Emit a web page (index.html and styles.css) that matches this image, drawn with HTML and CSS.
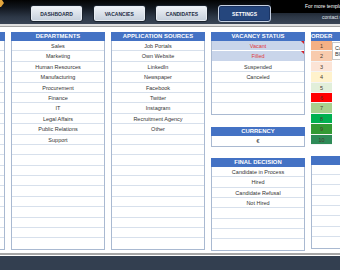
FILE: index.html
```html
<!DOCTYPE html>
<html>
<head>
    <title>Recruitment Tracker - Settings</title>
    <link rel="stylesheet" href="styles.css">
</head>
<body>
    <header class="topbar">
        <div class="logo">
            <svg width="8" height="9" viewBox="0 0 8 9"><path d="M0 0h4l2 3-3 4H0z" fill="#e3a53c"/></svg>
        </div>
        <nav class="tabs">
            <div class="tab">DASHBOARD</div>
            <div class="tab">VACANCIES</div>
            <div class="tab">CANDIDATES</div>
            <div class="tab active">SETTINGS</div>
        </nav>
        <div class="promo">
            <div class="promo-top">For more templates</div>
            <div class="promo-bottom">contact us</div>
        </div>
    </header>
    <div class="rule"></div>

    <main class="board">
        <div class="col">
            <div class="panel">
                <div class="panel-head">POSITIONS</div>
                <div class="rows" id="positions"></div>
            </div>
        </div>

        <div class="col">
            <div class="panel">
                <div class="panel-head">DEPARTMENTS</div>
                <div class="rows" id="departments"></div>
            </div>
        </div>

        <div class="col">
            <div class="panel">
                <div class="panel-head">APPLICATION SOURCES</div>
                <div class="rows" id="sources"></div>
            </div>
        </div>

        <div class="col">
            <div class="panel">
                <div class="panel-head">VACANCY STATUS</div>
                <div class="rows" id="status"></div>
            </div>
            <div class="panel currency">
                <div class="panel-head">CURRENCY</div>
                <div class="rows">
                    <div class="row">€</div>
                </div>
            </div>
            <div class="panel decision">
                <div class="panel-head">FINAL DECISION</div>
                <div class="rows" id="decision"></div>
            </div>
        </div>

        <div class="col">
            <div class="panel order">
                <div class="panel-head order-head"><span>ORDER</span></div>
                <div class="rows" id="order"></div>
                <div class="note">Candidate<br>Blue</div>
            </div>
            <div class="panel decision">
                <div class="panel-head">STAGES</div>
                <div class="rows" id="stages"></div>
            </div>
        </div>
    </main>

    <footer class="bottombar"></footer>

    <script>
        function fillRows(id, items, total, flagged) {
            const box = document.getElementById(id);
            for (let i = 0; i < total; i++) {
                let row = document.createElement("div");
                row.className = "row";
                row.textContent = items[i] || "";
                if (flagged && i < flagged) row.classList.add("flag");
                box.appendChild(row);
            }
        }

        fillRows("positions", [], 20);
        fillRows("departments", ["Sales", "Marketing", "Human Resources", "Manufacturing", "Procurement",
            "Finance", "IT", "Legal Affairs", "Public Relations", "Support"], 20);
        fillRows("sources", ["Job Portals", "Own Website", "LinkedIn", "Newspaper", "Facebook",
            "Twitter", "Instagram", "Recruitment Agency", "Other"], 20);
        fillRows("status", ["Vacant", "Filled", "Suspended", "Canceled"], 7, 2);
        fillRows("decision", ["Candidate in Process", "Hired", "Candidate Refusal", "Not Hired"], 8);
        fillRows("stages", [], 8);

        const orderColors = ["#f4b084", "#f8cbad", "#fce4d6", "#fff2cc", "#e2efda",
            "#ff0000", "#a9d08e", "#00b050", "#339933", "#2e8b57"];
        const order = document.getElementById("order");
        orderColors.forEach((color, index) => {
            let row = document.createElement("div");
            row.className = "order-row";
            let cell = document.createElement("div");
            cell.className = "order-cell";
            cell.style.background = color;
            cell.textContent = index + 1;
            row.appendChild(cell);
            order.appendChild(row);
        });
    </script>
</body>
</html>
```

FILE: styles.css
```css
* {
    box-sizing: border-box;
}

body {
    margin: 0;
    width: 340px;
    height: 270px;
    overflow: hidden;
    font-family: 'Liberation Sans', Arial, sans-serif;
    background: #ffffff;
}

/* top navigation */
.topbar {
    height: 24px;
    display: flex;
    align-items: flex-start;
    background: linear-gradient(to bottom, #030303 0%, #10151c 30%, #2c3746 70%, #3a4556 100%);
    overflow: hidden;
}

.logo {
    width: 30px;
    height: 24px;
}

.logo svg {
    display: block;
    margin-left: -2px;
}

.tabs {
    display: flex;
    gap: 9.7px;
    padding-top: 5px;
}

.tab {
    width: 53px;
    height: 17px;
    border: 1px solid #1a222d;
    border-radius: 3px;
    background: linear-gradient(to bottom, #f1f4f8, #c4cedb);
    box-shadow: inset 0 0 0 1px #e8edf3;
    color: #1f2c44;
    font-size: 5px;
    font-weight: bold;
    display: flex;
    align-items: center;
    justify-content: center;
}

.tab.active {
    background: #25467d;
    border-color: #c6d1e2;
    box-shadow: inset 0 0 0 1px #1b3463;
    color: #ffffff;
}

.promo {
    flex: 1;
    font-size: 5px;
    white-space: nowrap;
    overflow: hidden;
}

.promo-top {
    height: 13px;
    line-height: 12px;
    padding-left: 34px;
    background: #000000;
    color: #ffffff;
}

.promo-bottom {
    line-height: 9px;
    padding-left: 51px;
    color: #e4e8ee;
}

.rule {
    height: 3px;
    background: #e0e0e0;
    border-bottom: 1px solid #a3a3a3;
}

/* settings tables */
.board {
    display: flex;
    align-items: flex-start;
    gap: 6px;
    margin: 5px 0 0 -89px;
    height: 217px;
}

.col {
    width: 94px;
    flex-shrink: 0;
}

.panel {
    border: 1px solid #a9b9d1;
    border-top: none;
    position: relative;
}

.panel-head {
    height: 9px;
    margin: 0 -1px;
    background: #4472c4;
    color: #ffffff;
    font-size: 5.9px;
    font-weight: bold;
    line-height: 9px;
    text-align: center;
    white-space: nowrap;
}

.row {
    height: 10.4px;
    line-height: 10px;
    border-bottom: 1px solid #d7e0ec;
    font-size: 5.5px;
    color: #333333;
    text-align: center;
    white-space: nowrap;
    position: relative;
}

.row:last-child {
    border-bottom: none;
}

.row.flag {
    background: #c9d5ea;
    color: #e0383c;
    border-bottom-color: #ffffff;
}

.row.flag::after {
    content: "";
    position: absolute;
    top: 0;
    right: 0;
    border-top: 3px solid #d0202a;
    border-left: 3px solid transparent;
}

.currency {
    margin-top: 12px;
}

.decision {
    margin-top: 10.6px;
}

/* order column */
.order {
    border: none;
}

.order-head {
    margin: 0;
    text-align: left;
}

.order-head span {
    display: inline-block;
    width: 21px;
    text-align: center;
}

.order-row {
    height: 10.4px;
}

.order-cell {
    width: 21px;
    height: 10.4px;
    line-height: 10.4px;
    border-bottom: 1px solid #f4f4f4;
    font-size: 5.5px;
    color: #4a3a30;
    text-align: center;
}

.note {
    position: absolute;
    top: 10px;
    left: 21px;
    width: 40px;
    height: 18px;
    padding: 2px 2px;
    background: #ffffff;
    border: 1px solid #c8c8c8;
    font-size: 5.5px;
    line-height: 6px;
    color: #333333;
}

.bottombar {
    margin-top: 4px;
    height: 20px;
    border-top: 2px solid #a6a6a6;
    box-shadow: inset 0 1px 0 #ffffff;
    background: #333f50;
}
```
